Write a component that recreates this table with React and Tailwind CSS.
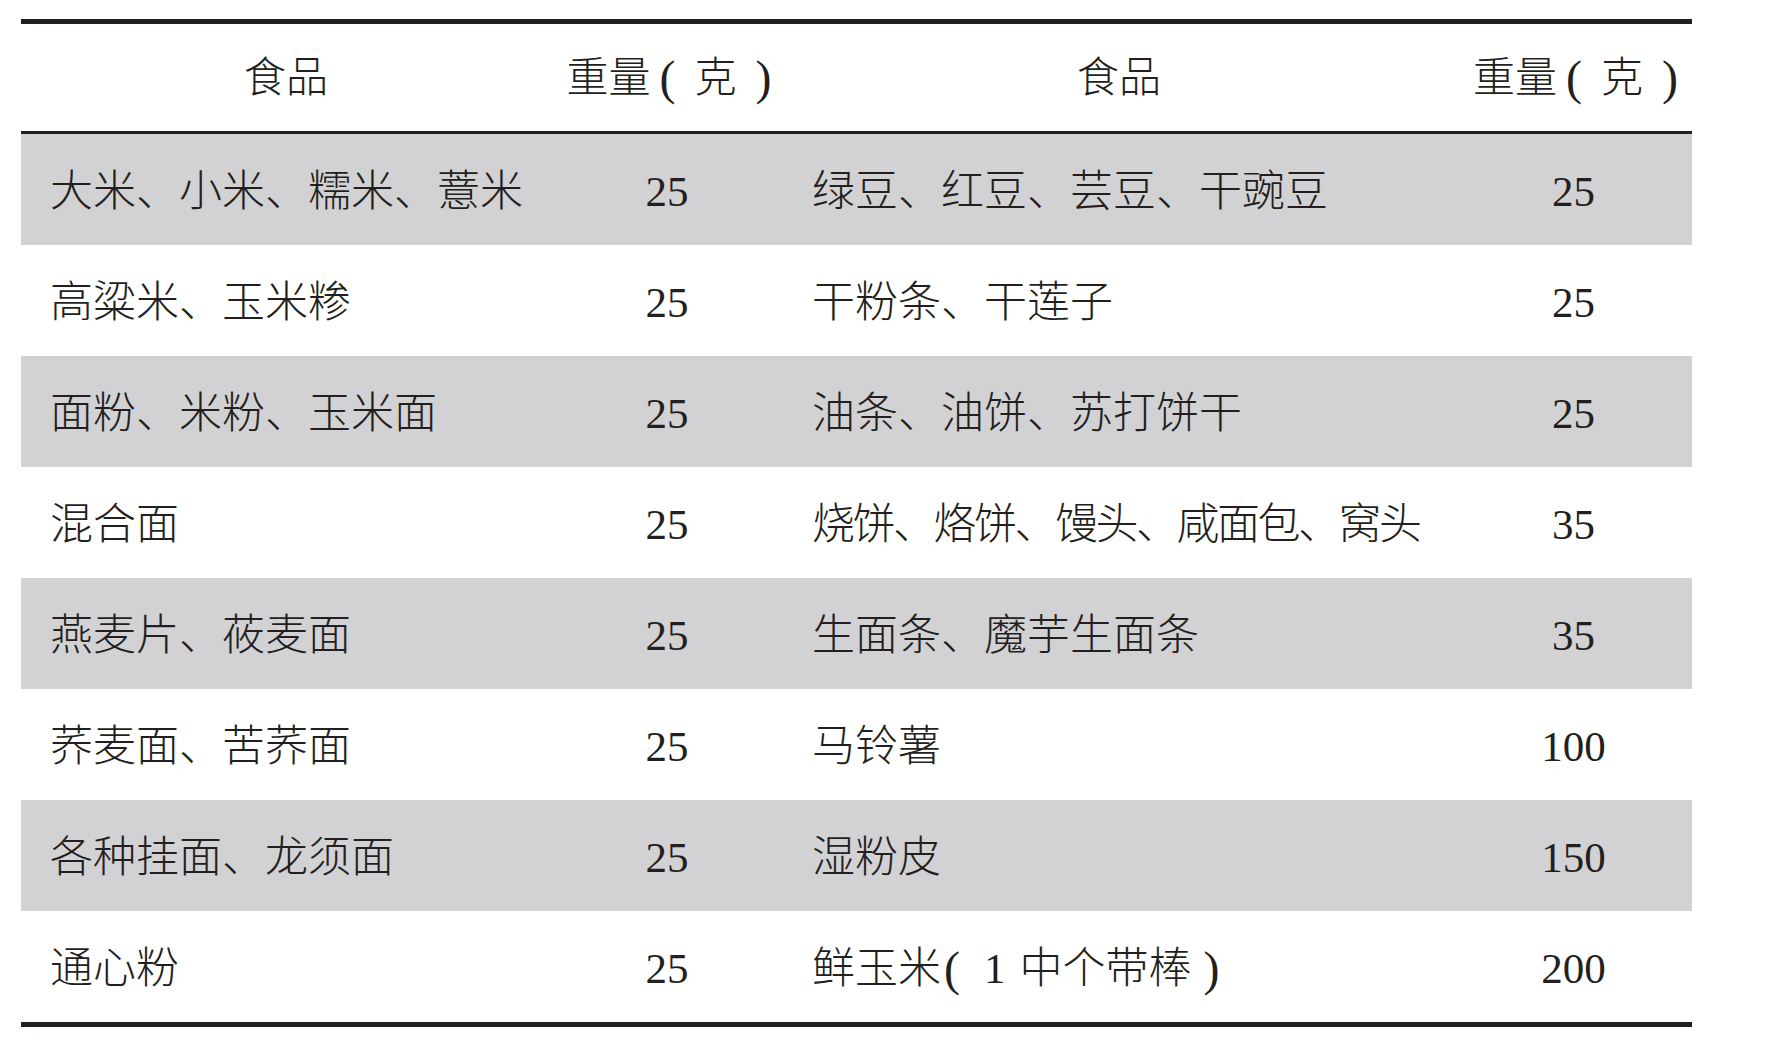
import React from 'react';

const rows = [
    ['大米、小米、糯米、薏米', '25', '绿豆、红豆、芸豆、干豌豆', '25'],
    ['高粱米、玉米糁', '25', '干粉条、干莲子', '25'],
    ['面粉、米粉、玉米面', '25', '油条、油饼、苏打饼干', '25'],
    ['混合面', '25', '烧饼、烙饼、馒头、咸面包、窝头', '35'],
    ['燕麦片、莜麦面', '25', '生面条、魔芋生面条', '35'],
    ['荞麦面、苦荞面', '25', '马铃薯', '100'],
    ['各种挂面、龙须面', '25', '湿粉皮', '150'],
    ['通心粉', '25', null, '200'],
];

const cols = 'grid grid-cols-[530px_232px_672px_237px]';

// tall thin bracket like the printed one
const Paren = ({ children, className = '' }) => (
    <span className={`text-[48px] leading-none ${className}`}>{children}</span>
);

const WeightHead = () => (
    <div className="flex items-center justify-center pl-[4px]">
        <span>重量</span>
        <Paren className="ml-[9px]">(</Paren>
        <span className="ml-[19px]">克</span>
        <Paren className="ml-[19px]">)</Paren>
    </div>
);

const CornCell = () => (
    <div className="flex items-center pl-[29px] pt-[4px] whitespace-nowrap">
        <span>鲜玉米</span>
        <Paren className="ml-[3px]">(</Paren>
        <span className="ml-[24px]">1</span>
        <span className="ml-[14px]">中个带棒</span>
        <Paren className="ml-[12px]">)</Paren>
    </div>
);

const App = () => {
    return (
        <div
            className="w-[1768px] h-[1050px] bg-white pt-[19px] pl-[21px] text-[#231f20]"
            style={{ fontFamily: '"Liberation Serif", "Noto Sans CJK SC", serif' }}
        >
            <div className="w-[1671px] border-t-[5px] border-b-[5px] border-[#231f20]">
                <div className={`${cols} h-[110px] border-b-[3px] border-[#231f20] text-[42px] leading-none font-light`}>
                    <div className="flex items-center justify-center">食品</div>
                    <WeightHead />
                    <div className="flex items-center justify-center">食品</div>
                    <WeightHead />
                </div>

                {rows.map((row, i) => (
                    <div
                        key={i}
                        className={`${cols} h-[111px] text-[43px] leading-none font-light ${i % 2 === 0 ? 'bg-[#d2d1d3]' : 'bg-white'}`}
                    >
                        <div className="flex items-center pl-[29px] pt-[4px] whitespace-nowrap">{row[0]}</div>
                        <div className="flex items-center justify-center pt-[4px]">{row[1]}</div>
                        {row[2] ? (
                            <div
                                className={`flex items-center pl-[29px] pt-[4px] whitespace-nowrap ${row[2].length > 13 ? 'tracking-[-2.5px]' : ''}`}
                            >
                                {row[2]}
                            </div>
                        ) : (
                            <CornCell />
                        )}
                        <div className="flex items-center justify-center pt-[4px]">{row[3]}</div>
                    </div>
                ))}
            </div>
        </div>
    );
};

export default App;
